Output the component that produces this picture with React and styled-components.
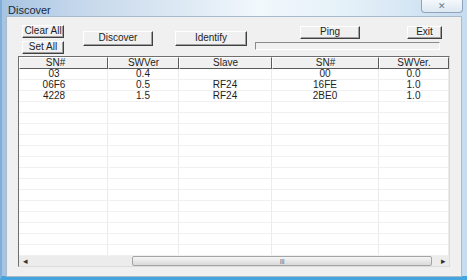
import styled, { createGlobalStyle } from "styled-components";

const GlobalStyle = createGlobalStyle`
  * {
    box-sizing: border-box;
  }
  body {
    margin: 0;
    overflow: hidden;
    font-family: "Liberation Sans", Arial, sans-serif;
  }
`;

const columns = ["SN#", "SWVer", "Slave", "SN#", "SWVer."];
const rows = [
  ["03", "0.4", "", "00", "0.0"],
  ["06F6", "0.5", "RF24", "16FE", "1.0"],
  ["4228", "1.5", "RF24", "2BE0", "1.0"],
];
const EMPTY_ROWS = 14;

function App() {
  return (
    <>
      <GlobalStyle />
      <Window>
        <TitleBar>
          <Title>Discover</Title>
          <CloseButton>✕</CloseButton>
        </TitleBar>
        <Client>
          <Toolbar>
            <LeftStack>
              <Button $w={42} $h={13}>Clear All</Button>
              <Button $w={42} $h={13}>Set All</Button>
            </LeftStack>
            <Button $w={70} $h={15} $ml={19} $mt={6}>Discover</Button>
            <Button $w={72} $h={15} $ml={22} $mt={6}>Identify</Button>
            <RightGroup>
              <RightRow>
                <Button $w={60} $h={13} $ml={45}>Ping</Button>
                <Button $w={35} $h={13} $ml={47}>Exit</Button>
              </RightRow>
              <Progress />
            </RightGroup>
          </Toolbar>
          <Table>
            <HeaderRow>
              {columns.map((c, i) => (
                <HeaderCell key={i} $first={i === 0}>{c}</HeaderCell>
              ))}
            </HeaderRow>
            <Body>
              {rows.map((r, i) => (
                <Row key={i}>
                  {r.map((v, j) => (
                    <Cell key={j} $first={j === 0}>{v}</Cell>
                  ))}
                </Row>
              ))}
              {Array.from({ length: EMPTY_ROWS }).map((_, i) => (
                <Row key={"e" + i}>
                  {columns.map((_, j) => (
                    <Cell key={j} $first={j === 0} />
                  ))}
                </Row>
              ))}
            </Body>
            <ScrollBar>
              <ScrollArrow>◂</ScrollArrow>
              <Track>
                <Thumb $left={101} $width={300}>III</Thumb>
              </Track>
              <ScrollArrow>▸</ScrollArrow>
            </ScrollBar>
          </Table>
        </Client>
      </Window>
    </>
  );
}

export default App;

const Window = styled.div`
  width: 467px;
  height: 280px;
  display: flex;
  flex-direction: column;
  background: linear-gradient(
    90deg,
    #a6c4e2 0%,
    #c3d6ea 15%,
    #dfeaf5 40%,
    #f2f8fc 55%,
    #e4f0f8 75%,
    #c6dcef 100%
  );
  border-left: 2px solid #7eaed9;
  border-bottom: 4px solid #44a4de;
  padding: 0 5px 2px 4px;
`;

const TitleBar = styled.div`
  height: 19px;
  display: flex;
  align-items: flex-start;
  justify-content: space-between;
`;

const Title = styled.span`
  margin-left: 2px;
  margin-top: 4px;
  font-family: "Liberation Sans", Arial, sans-serif;
  font-size: 11px;
  color: #1a2a3a;
`;

const CloseButton = styled.div`
  width: 42px;
  height: 13px;
  margin-right: -1px;
  border: 1px solid #8fa3bb;
  border-top: none;
  border-radius: 0 0 4px 4px;
  background: linear-gradient(#f4f8fc, #dde8f2);
  display: flex;
  align-items: center;
  justify-content: center;
  font-size: 9px;
  color: #6a7a8a;
`;

const Client = styled.div`
  flex: 1;
  display: flex;
  flex-direction: column;
  background: #f0f0f0;
  border: 1px solid #a9bacb;
`;

const Toolbar = styled.div`
  height: 39px;
  display: flex;
  align-items: flex-start;
  padding: 8px 0 0 15px;
`;

const LeftStack = styled.div`
  display: flex;
  flex-direction: column;
  gap: 3px;
`;

const Button = styled.div`
  width: ${(p) => p.$w}px;
  height: ${(p) => p.$h}px;
  margin-left: ${(p) => p.$ml || 0}px;
  margin-top: ${(p) => p.$mt || 0}px;
  background: #f0f0f0;
  border-style: solid;
  border-width: 1px;
  border-color: #ffffff #404040 #404040 #ffffff;
  box-shadow: inset -1px -1px 0 #a0a0a0;
  display: flex;
  align-items: center;
  justify-content: center;
  font-size: 10px;
  line-height: 1;
  padding-bottom: 1px;
  color: #1e1e1e;
  white-space: nowrap;
`;

const RightGroup = styled.div`
  margin-left: 8px;
  margin-top: 1px;
  width: 187px;
  display: flex;
  flex-direction: column;
`;

const RightRow = styled.div`
  display: flex;
`;

const Progress = styled.div`
  margin-top: 3px;
  width: 185px;
  height: 8px;
  border-style: solid;
  border-width: 1px;
  border-color: #8a8a8a #ffffff #ffffff #8a8a8a;
  background: #f0f0f0;
`;

const Table = styled.div`
  flex: 1;
  margin: 0 11px 9px 11px;
  display: flex;
  flex-direction: column;
  overflow: hidden;
  background: #ffffff;
  border-style: solid;
  border-width: 1px;
  border-color: #6e6e6e #dcdcdc #dcdcdc #6e6e6e;
`;

const grid = `
  display: grid;
  grid-template-columns: 89px 71px 93px 107px 70px;
`;

const HeaderRow = styled.div`
  ${grid}
  height: 12px;
  flex-shrink: 0;
`;

const HeaderCell = styled.div`
  background: #f0f0f0;
  border-style: solid;
  border-width: 1px;
  border-color: #ffffff #5a5a5a #5a5a5a #ffffff;
  display: flex;
  align-items: center;
  justify-content: center;
  padding-right: ${(p) => (p.$first ? 16 : 0)}px;
  font-size: 10px;
  color: #1e1e1e;
  line-height: 1;
`;

const Body = styled.div`
  flex: 1;
  overflow: hidden;
`;

const Row = styled.div`
  ${grid}
  height: 11px;
`;

const Cell = styled.div`
  border-right: 1px solid #ebebeb;
  border-bottom: 1px solid #f0f0f0;
  display: flex;
  align-items: center;
  justify-content: center;
  padding-right: ${(p) => (p.$first ? 18 : 0)}px;
  font-size: 10px;
  color: #1e1e1e;
  line-height: 1;
`;

const ScrollBar = styled.div`
  height: 10px;
  flex-shrink: 0;
  display: flex;
  background: #ececec;
`;

const ScrollArrow = styled.div`
  width: 12px;
  display: flex;
  align-items: center;
  justify-content: center;
  font-size: 9px;
  color: #333;
`;

const Track = styled.div`
  flex: 1;
  display: flex;
  align-items: stretch;
`;

const Thumb = styled.div`
  margin-left: ${(p) => p.$left}px;
  width: ${(p) => p.$width}px;
  border: 1px solid #a4a4a4;
  border-radius: 2px;
  background: linear-gradient(#f6f6f6, #dadada);
  display: flex;
  align-items: center;
  justify-content: center;
  font-size: 7px;
  letter-spacing: -0.5px;
  color: #777;
`;
